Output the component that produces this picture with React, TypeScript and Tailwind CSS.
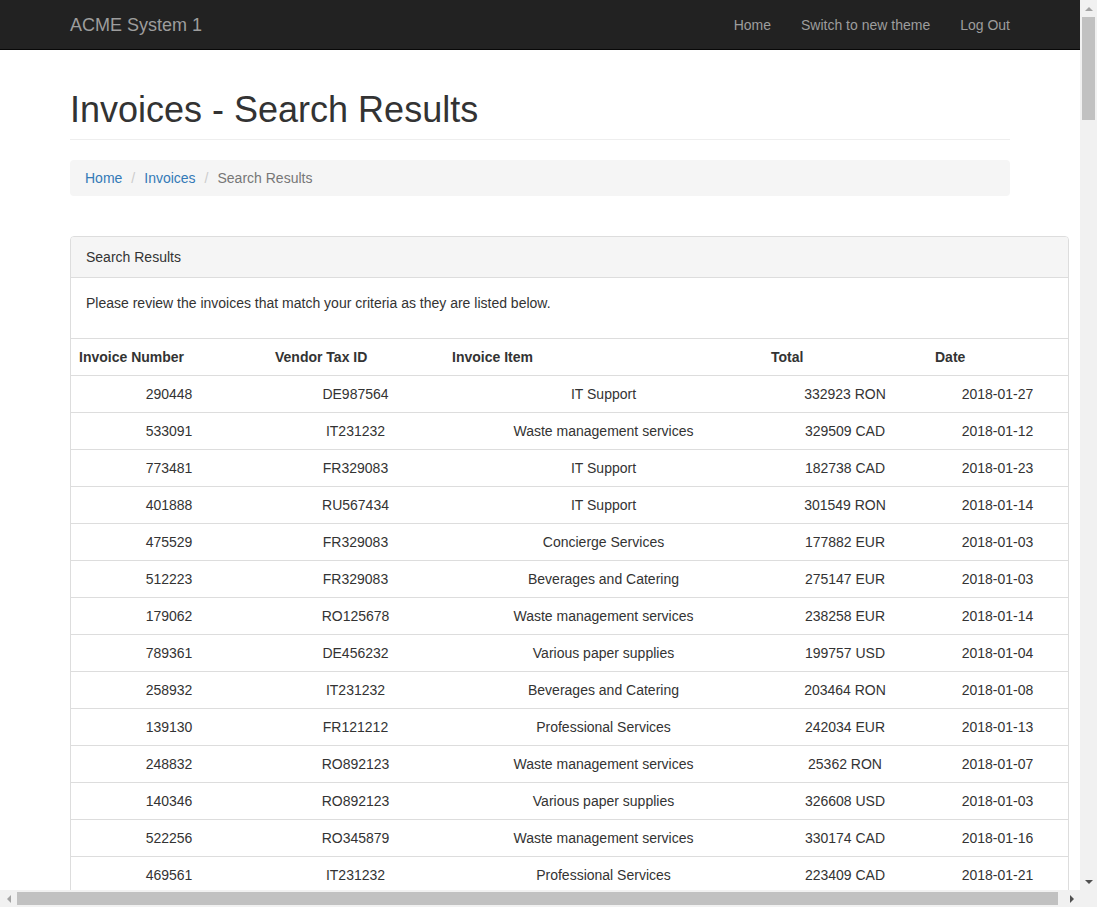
import React from "react";

type Invoice = {
  number: string;
  vendor: string;
  item: string;
  total: string;
  date: string;
};

const invoices: Invoice[] = [
  { number: "290448", vendor: "DE987564", item: "IT Support", total: "332923 RON", date: "2018-01-27" },
  { number: "533091", vendor: "IT231232", item: "Waste management services", total: "329509 CAD", date: "2018-01-12" },
  { number: "773481", vendor: "FR329083", item: "IT Support", total: "182738 CAD", date: "2018-01-23" },
  { number: "401888", vendor: "RU567434", item: "IT Support", total: "301549 RON", date: "2018-01-14" },
  { number: "475529", vendor: "FR329083", item: "Concierge Services", total: "177882 EUR", date: "2018-01-03" },
  { number: "512223", vendor: "FR329083", item: "Beverages and Catering", total: "275147 EUR", date: "2018-01-03" },
  { number: "179062", vendor: "RO125678", item: "Waste management services", total: "238258 EUR", date: "2018-01-14" },
  { number: "789361", vendor: "DE456232", item: "Various paper supplies", total: "199757 USD", date: "2018-01-04" },
  { number: "258932", vendor: "IT231232", item: "Beverages and Catering", total: "203464 RON", date: "2018-01-08" },
  { number: "139130", vendor: "FR121212", item: "Professional Services", total: "242034 EUR", date: "2018-01-13" },
  { number: "248832", vendor: "RO892123", item: "Waste management services", total: "25362 RON", date: "2018-01-07" },
  { number: "140346", vendor: "RO892123", item: "Various paper supplies", total: "326608 USD", date: "2018-01-03" },
  { number: "522256", vendor: "RO345879", item: "Waste management services", total: "330174 CAD", date: "2018-01-16" },
  { number: "469561", vendor: "IT231232", item: "Professional Services", total: "223409 CAD", date: "2018-01-21" },
];

const columns = [
  { label: "Invoice Number", width: "w-[196px]" },
  { label: "Vendor Tax ID", width: "w-[177px]" },
  { label: "Invoice Item", width: "w-[319px]" },
  { label: "Total", width: "w-[164px]" },
  { label: "Date", width: "" },
];

function Navbar() {
  return (
    <div className="h-[50px] border-b border-[#080808] bg-[#222222]">
      <div className="mx-auto flex h-[49px] w-[970px] items-center px-[15px]">
        <a className="text-[18px] leading-[20px] text-[#9d9d9d]">ACME System 1</a>
        <ul className="ml-auto mr-[-15px] flex text-[14px] leading-[20px] text-[#9d9d9d]">
          <li className="px-[15px] py-[14px]">Home</li>
          <li className="px-[15px] py-[14px]">Switch to new theme</li>
          <li className="px-[15px] py-[14px]">Log Out</li>
        </ul>
      </div>
    </div>
  );
}

function Breadcrumb() {
  return (
    <ol className="mb-[20px] flex rounded-[4px] bg-[#f5f5f5] px-[15px] py-[8px] leading-[20px]">
      <li className="text-[#337ab7]">Home</li>
      <li className="px-[9px] text-[#cccccc]">/</li>
      <li className="text-[#337ab7]">Invoices</li>
      <li className="px-[9px] text-[#cccccc]">/</li>
      <li className="text-[#777777]">Search Results</li>
    </ol>
  );
}

function ResultsTable() {
  return (
    <table className="w-full border-collapse">
      <thead>
        <tr className="border-t border-[#dddddd]">
          {columns.map((c) => (
            <th key={c.label} className={`${c.width} p-[8px] text-left font-bold leading-[20px]`}>
              {c.label}
            </th>
          ))}
        </tr>
      </thead>
      <tbody>
        {invoices.map((inv) => (
          <tr key={inv.number} className="border-t border-[#dddddd]">
            <td className="p-[8px] text-center leading-[20px]">{inv.number}</td>
            <td className="p-[8px] text-center leading-[20px]">{inv.vendor}</td>
            <td className="p-[8px] text-center leading-[20px]">{inv.item}</td>
            <td className="p-[8px] text-center leading-[20px]">{inv.total}</td>
            <td className="p-[8px] text-center leading-[20px]">{inv.date}</td>
          </tr>
        ))}
      </tbody>
    </table>
  );
}

// browser chrome scrollbars, drawn over the page
function Scrollbars() {
  return (
    <>
      <div className="fixed right-0 top-0 flex h-[890px] w-[17px] flex-col items-center bg-[#f1f1f1]">
        <div className="flex h-[17px] items-center justify-center">
          <div className="h-0 w-0 border-x-[4px] border-b-[4px] border-x-transparent border-b-[#a3a3a3]" />
        </div>
        <div className="h-[103px] w-[13px] bg-[#c1c1c1]" />
        <div className="flex-1" />
        <div className="flex h-[17px] items-center justify-center">
          <div className="h-0 w-0 border-x-[4px] border-t-[4px] border-x-transparent border-t-[#505050]" />
        </div>
      </div>
      <div className="fixed bottom-0 left-0 flex h-[17px] w-[1080px] items-center bg-[#f1f1f1]">
        <div className="flex w-[17px] items-center justify-center">
          <div className="h-0 w-0 border-y-[4px] border-r-[4px] border-y-transparent border-r-[#a3a3a3]" />
        </div>
        <div className="h-[13px] w-[1041px] bg-[#c1c1c1]" />
        <div className="flex-1" />
        <div className="flex w-[17px] items-center justify-center">
          <div className="h-0 w-0 border-y-[4px] border-l-[4px] border-y-transparent border-l-[#505050]" />
        </div>
      </div>
      <div className="fixed bottom-0 right-0 h-[17px] w-[17px] bg-[#f1f1f1]" />
    </>
  );
}

export default function App() {
  return (
    <div className="h-[907px] overflow-hidden bg-white font-['Liberation_Sans',Arial,sans-serif] text-[14px] leading-[20px] text-[#333333]">
      <div className="w-[1080px]">
        <Navbar />
        <div className="mx-auto w-[970px] px-[15px]">
          <div className="mb-[20px] mt-[40px] border-b border-[#eeeeee] pb-[9px]">
            <h1 className="mt-[20px] text-[36px] leading-[40px] font-normal">Invoices - Search Results</h1>
          </div>
          <Breadcrumb />
          <div className="mt-[40px] mb-[20px] w-[999px] rounded-[4px] border border-[#dddddd] bg-white">
            <div className="rounded-t-[3px] border-b border-[#dddddd] bg-[#f5f5f5] px-[15px] py-[10px]">
              Search Results
            </div>
            <div className="p-[15px]">
              <p className="mb-[10px]">Please review the invoices that match your criteria as they are listed below.</p>
            </div>
            <ResultsTable />
          </div>
        </div>
      </div>
      <Scrollbars />
    </div>
  );
}
